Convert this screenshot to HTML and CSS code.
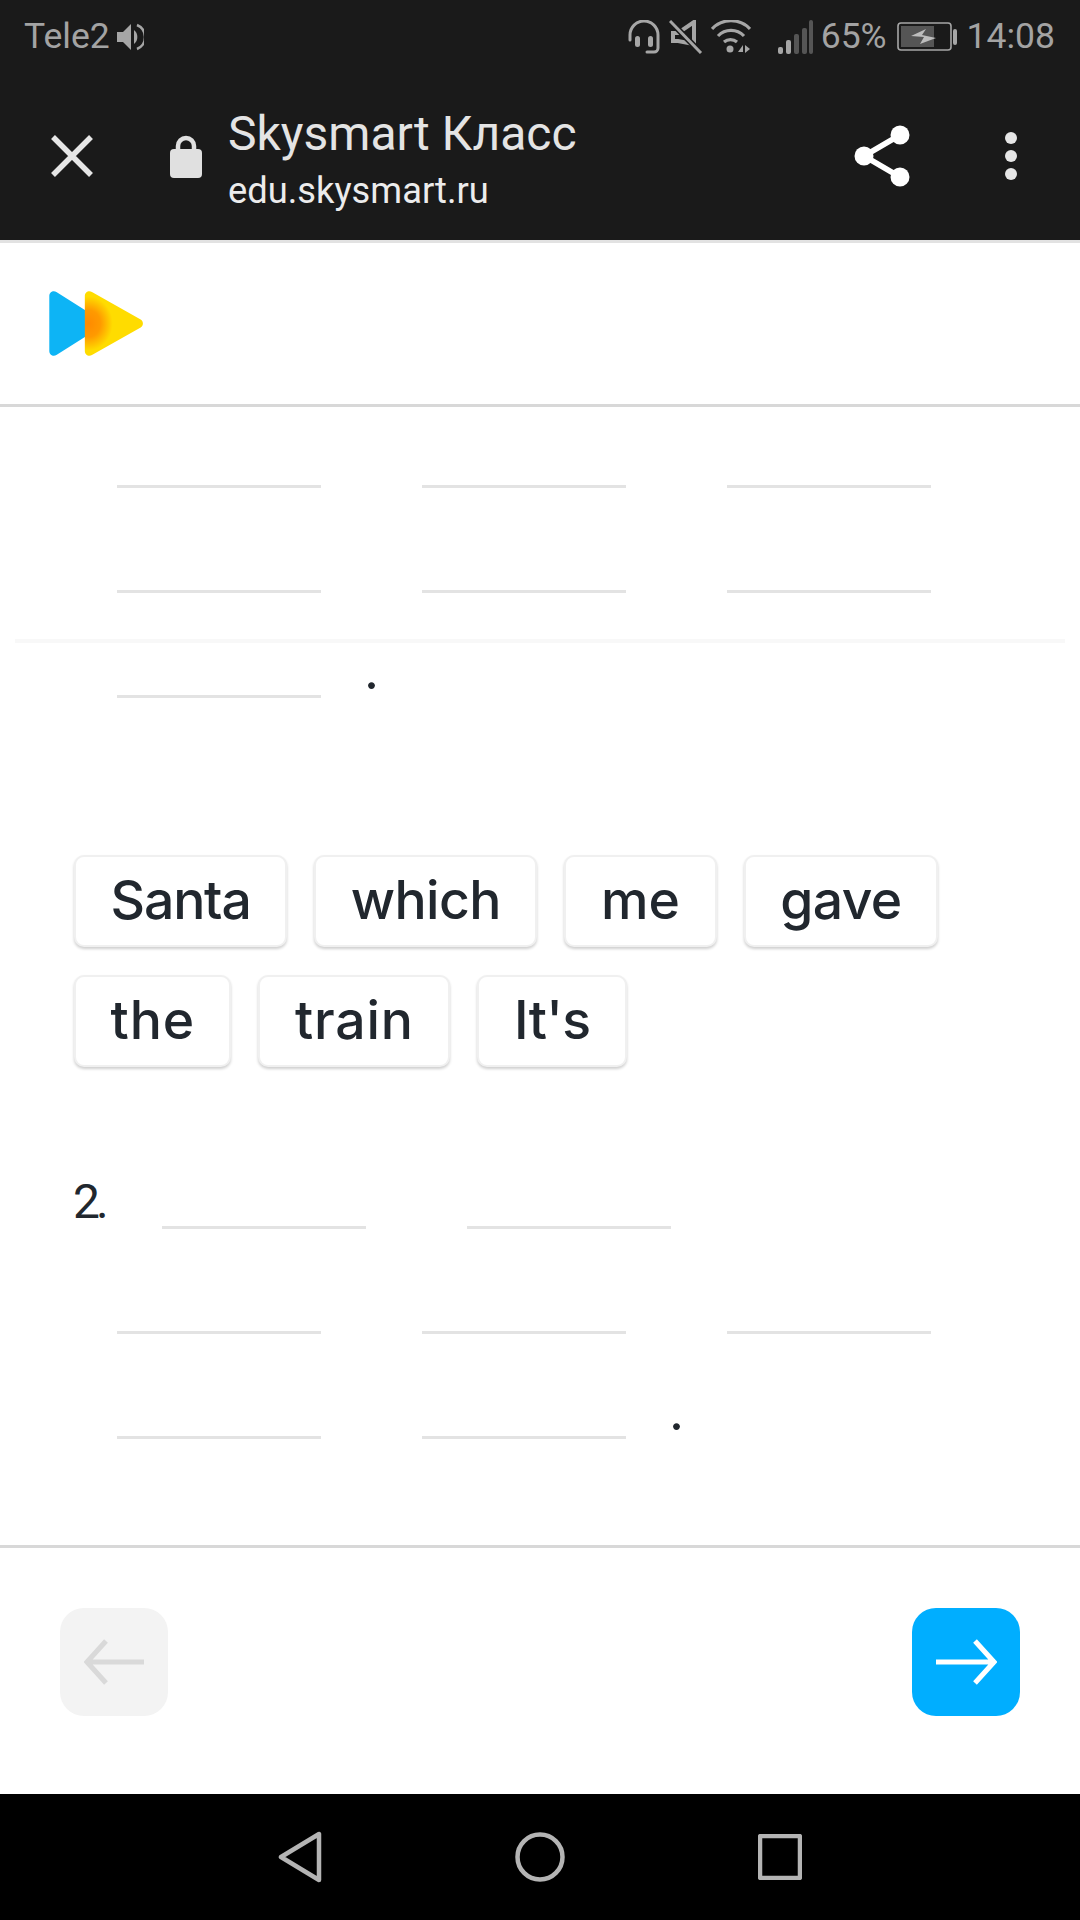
FILE: index.html
```html
<!DOCTYPE html>
<html lang="ru">
<head>
<meta charset="utf-8">
<title>Skysmart Класс</title>
<link rel="stylesheet" href="styles.css">
</head>
<body>
<div class="screen">
  <div class="chrome">
    <div class="status">
      <span class="st-text">Tele2</span>
      <svg class="i-speaker" width="27" height="28" viewBox="0 0 27 28"><path d="M0 9h6l8-8v26l-8-8H0z" fill="#a6a6a6"/><path d="M17 7a9 9 0 0 1 0 14z" fill="#a6a6a6"/><path d="M20 2a13 13 0 0 1 0 24" fill="none" stroke="#a6a6a6" stroke-width="2.5"/></svg>
      <span class="st-spacer"></span>
      <svg class="i-head" width="32" height="34" viewBox="0 0 32 34"><path d="M2 20v-5a14 14 0 0 1 28 0v13a4 4 0 0 1-4 4h-7" fill="none" stroke="#a6a6a6" stroke-width="3" stroke-linecap="round"/><rect x="7" y="16" width="5" height="11" rx="2.5" fill="#a6a6a6"/><rect x="20" y="16" width="5" height="11" rx="2.5" fill="#a6a6a6"/></svg>
      <svg class="i-mute" width="34" height="34" viewBox="0 0 34 34"><path d="M4 13h5l16-11v22l-16-3H4z" fill="none" stroke="#a6a6a6" stroke-width="4"/><path d="M1 1l31 32" stroke="#1a1a1a" stroke-width="6"/><path d="M1 1l31 32" stroke="#a6a6a6" stroke-width="3"/></svg>
      <svg class="i-wifi" width="40" height="34" viewBox="0 0 40 34"><path d="M1 9a26 26 0 0 1 38 0M7 16a18 18 0 0 1 26 0M13 22a10 10 0 0 1 13 0" fill="none" stroke="#a6a6a6" stroke-width="3.2"/><circle cx="19" cy="29" r="3.5" fill="#a6a6a6"/><path d="M27 32l5-7v7zM34 25v8l5-4z" fill="#a6a6a6"/></svg>
      <svg class="i-signal" width="35" height="34" viewBox="0 0 35 34"><rect x="0" y="27" width="5" height="7" rx="2" fill="#a6a6a6"/><rect x="8" y="20" width="5" height="14" rx="2" fill="#a6a6a6"/><rect x="16" y="14" width="5" height="20" rx="2" fill="#555"/><rect x="24" y="8" width="5" height="26" rx="2" fill="#555"/><rect x="31" y="0" width="4" height="34" rx="2" fill="#555"/></svg>
      <span class="st-text st-pct">65%</span>
      <svg class="i-batt" width="60" height="30" viewBox="0 0 60 30"><rect x="1" y="1" width="53" height="27" rx="3" fill="none" stroke="#a6a6a6" stroke-width="1.6"/><rect x="4" y="4" width="33" height="21" fill="#555"/><path d="M14 14l15-7-4 6 14 3-16 6 4-7z" fill="#bdbdbd"/><rect x="56" y="7" width="4" height="16" rx="2" fill="#a6a6a6"/></svg>
      <span class="st-text st-time">14:08</span>
    </div>
    <div class="toolbar">
      <svg class="i-close" width="42" height="42" viewBox="0 0 42 42"><path d="M2 2l38 38M40 2L2 40" stroke="#e6e6e6" stroke-width="5.5"/></svg>
      <svg class="i-lock" width="32" height="43" viewBox="0 0 32 43"><path d="M8 18v-7a8 8 0 0 1 16 0v7" fill="none" stroke="#e0e0e0" stroke-width="4.5"/><rect x="0" y="14" width="32" height="29" rx="4" fill="#e0e0e0"/></svg>
      <div class="tb-titles">
        <div class="tb-title">Skysmart Класс</div>
        <div class="tb-url">edu.skysmart.ru</div>
      </div>
      <svg class="i-share" width="56" height="62" viewBox="0 0 56 62"><path d="M46 10L10 31l36 21" fill="none" stroke="#fff" stroke-width="5.5"/><circle cx="46" cy="10" r="9.5" fill="#fff"/><circle cx="10" cy="31" r="9.5" fill="#fff"/><circle cx="46" cy="52" r="9.5" fill="#fff"/></svg>
      <svg class="i-more" width="12" height="48" viewBox="0 0 12 48"><circle cx="6" cy="6" r="6" fill="#e6e6e6"/><circle cx="6" cy="24" r="6" fill="#e6e6e6"/><circle cx="6" cy="42" r="6" fill="#e6e6e6"/></svg>
    </div>
  </div>

  <header class="site-head">
    <svg width="96" height="67" viewBox="0 0 94 66">
      <defs>
        <radialGradient id="glow" cx="0.06" cy="0.5" r="0.42">
          <stop offset="0" stop-color="#ff8a00"/>
          <stop offset="0.5" stop-color="#ff9a00"/>
          <stop offset="0.85" stop-color="#ffc800"/>
          <stop offset="1" stop-color="#ffdc00"/>
        </radialGradient>
      </defs>
      <path d="M1 6c0-4 4-6 7-4l30 19v24L8 64c-3 2-7 0-7-4z" fill="#0db4f5"/>
      <path d="M36 6c0-4 4-6 7-4l48 27c3 2 3 6 0 8L43 64c-3 2-7 0-7-4z" fill="url(#glow)"/>
    </svg>
  </header>

  <main class="lesson">
    <div class="overlay-rule"></div>
    <section class="lines">
      <div class="row"><span class="blank"></span><span class="blank"></span><span class="blank"></span></div>
      <div class="row"><span class="blank"></span><span class="blank"></span><span class="blank"></span></div>
      <div class="row"><span class="blank"></span><span class="dot">.</span></div>
    </section>

    <div class="chips">
      <div class="chip chip-tight">Santa</div>
      <div class="chip chip-snug">which</div>
      <div class="chip">me</div>
      <div class="chip chip-snug">gave</div>
      <div class="chip chip-wide">the</div>
      <div class="chip chip-wide">train</div>
      <div class="chip chip-snug">It's</div>
    </div>

    <section class="lines second">
      <div class="row row-num"><span class="num">2.</span><span class="blank"></span><span class="blank"></span></div>
      <div class="row"><span class="blank"></span><span class="blank"></span><span class="blank"></span></div>
      <div class="row"><span class="blank"></span><span class="blank"></span><span class="dot">.</span></div>
    </section>
  </main>

  <footer class="pager">
    <div class="btn btn-off"><svg width="60" height="46" viewBox="0 0 60 46"><path d="M22 2L3 23l19 21M3 23h57" fill="none" stroke="#d9d9d9" stroke-width="5"/></svg></div>
    <div class="btn btn-on"><svg width="62" height="46" viewBox="0 0 62 46"><path d="M40 2l19 21-19 21M59 23H1" fill="none" stroke="#fff" stroke-width="5"/></svg></div>
  </footer>

  <nav class="navbar">
    <svg width="44" height="52" viewBox="0 0 44 52"><path d="M41 3v46L3 26z" fill="none" stroke="#b4b4b4" stroke-width="4.5" stroke-linejoin="round"/></svg>
    <svg width="50" height="52" viewBox="0 0 50 52"><circle cx="25" cy="26" r="22.5" fill="none" stroke="#b4b4b4" stroke-width="4.5"/></svg>
    <svg width="44" height="46" viewBox="0 0 44 46"><rect x="2" y="2" width="40" height="42" rx="1" fill="none" stroke="#b4b4b4" stroke-width="4.5"/></svg>
  </nav>
</div>
</body>
</html>
```
FILE: styles.css
```css
* { box-sizing: border-box; }
html, body { margin: 0; padding: 0; }
body { background: #fff; font-family: "Inter", "Liberation Sans", sans-serif; color: #21272e; }
svg { display: block; flex: none; }
.screen { width: 1080px; height: 1920px; display: flex; flex-direction: column; overflow: hidden; }

.chrome { background: #1a1a1a; height: 243px; border-bottom: 3px solid #e2e2e2; flex: none; }
.status { height: 72px; display: flex; align-items: center; padding: 2px 25px 0 24px; font-family: "Roboto", sans-serif; }
.st-text { font-size: 35.5px; color: #a3a3a3; line-height: 1; }
.i-speaker { margin-left: 7px; }
.st-spacer { flex: 1; }
.i-mute { margin-left: 9px; }
.i-wifi { margin-left: 8px; }
.i-signal { margin-left: 27px; }
.st-pct { margin-left: 8px; }
.i-batt { margin-left: 10px; }
.st-time { margin-left: 10px; }

.toolbar { height: 168px; display: flex; align-items: center; font-family: "Roboto", sans-serif; }
.i-close { margin-left: 51px; }
.i-lock { margin-left: 77px; }
.tb-titles { margin-left: 26px; flex: 1; padding-top: 10px; }
.tb-title { font-size: 48px; line-height: 60px; color: #e4e4e4; }
.tb-url { font-size: 36.3px; line-height: 54px; color: #ececec; }
.i-share { margin-right: 95px; }
.i-more { margin-right: 63px; }

.site-head { height: 164px; flex: none; border-bottom: 3px solid #d8d8d8; display: flex; align-items: center; padding-left: 48px; }

.lesson { flex: 1; position: relative; display: flex; flex-direction: column; }
.overlay-rule { position: absolute; left: 15px; right: 15px; top: 232px; height: 4px; background: #f8f8f8; }
.lines { padding: 78px 0 0 117px; display: flex; flex-direction: column; gap: 102px; }
.lines.second { padding-top: 159px; }
.row { display: flex; height: 3px; gap: 101px; align-items: flex-end; }
.blank { width: 204px; height: 3px; background: #e3e3e3; flex: none; }
.dot { font-size: 52px; line-height: 40px; width: 14px; height: 40px; margin-left: -58px; margin-bottom: 7px; }
.row-num { margin-left: -44px; }
.num { font-family: "Roboto", sans-serif; font-size: 48px; line-height: 50px; letter-spacing: -4px; width: 44px; margin-bottom: 2px; margin-right: -56px; }

.chips { display: flex; flex-wrap: wrap; gap: 28px 27px; padding: 157px 100px 0 74px; }
.chip { height: 92px; padding: 0 34.6px 4px; display: flex; align-items: center; font-size: 53.5px; font-weight: 450; background: #fff; border: 2px solid #f0f0f0; border-radius: 10px; box-shadow: 0 2px 3px #cfcfcf; }
.chip-tight { letter-spacing: -1.2px; }
.chip-snug { letter-spacing: -0.6px; }
.chip-wide { letter-spacing: 0.8px; }

.pager { height: 249px; flex: none; border-top: 3px solid #d8d8d8; display: flex; justify-content: space-between; padding: 60px 60px 0 60px; }
.btn { width: 108px; height: 108px; border-radius: 24px; display: flex; align-items: center; justify-content: center; }
.btn-off { background: #f3f3f3; }
.btn-on { background: #00aeff; }

.navbar { height: 126px; flex: none; background: #000; display: flex; align-items: center; justify-content: center; gap: 193px; }
```
